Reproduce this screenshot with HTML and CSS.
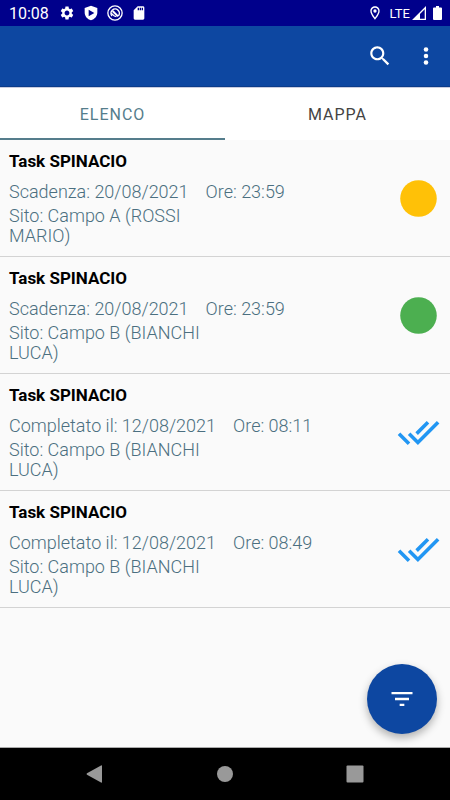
FILE: index.html
```html
<!DOCTYPE html>
<html lang="it">
<head>
<meta charset="utf-8">
<meta name="viewport" content="width=device-width, initial-scale=1">
<title>Elenco task</title>
<link rel="stylesheet" href="styles.css">
</head>
<body>
<div class="status">
  <span class="clock">10:08</span>
  <div class="status-left">
    <svg class="s-icon" viewBox="0 0 24 24"><path d="M19.14 12.94c.04-.3.06-.61.06-.94 0-.32-.02-.64-.07-.94l2.03-1.58c.18-.14.23-.41.12-.61l-1.92-3.32c-.12-.22-.37-.29-.59-.22l-2.39.96c-.5-.38-1.03-.7-1.62-.94l-.36-2.54c-.04-.24-.24-.41-.48-.41h-3.84c-.24 0-.43.17-.47.41l-.36 2.54c-.59.24-1.13.57-1.62.94l-2.39-.96c-.22-.08-.47 0-.59.22L2.74 8.87c-.12.21-.08.47.12.61l2.03 1.58c-.05.3-.09.63-.09.94s.02.64.07.94l-2.03 1.58c-.18.14-.23.41-.12.61l1.92 3.32c.12.22.37.29.59.22l2.39-.96c.5.38 1.03.7 1.62.94l.36 2.54c.05.24.24.41.48.41h3.84c.24 0 .44-.17.47-.41l.36-2.54c.59-.24 1.13-.56 1.62-.94l2.39.96c.22.08.47 0 .59-.22l1.92-3.32c.12-.22.07-.47-.12-.61l-2.01-1.58zM12 15.6c-1.98 0-3.6-1.62-3.6-3.6s1.62-3.6 3.6-3.6 3.6 1.62 3.6 3.6-1.62 3.6-3.6 3.6z"/></svg>
    <svg class="s-icon" viewBox="0 0 24 24"><path fill-rule="evenodd" d="M12 1L2.500 4.600V11c0 6 4 10.500 9.500 12 5.500-1.500 9.500-6 9.500-12V4.600zM8.500 7L17 12l-8.500 5z"/></svg>
    <svg class="s-icon" viewBox="0 0 24 24"><g fill="none" stroke="#fff"><circle cx="12" cy="12" r="10.700" stroke-width="2"/><path stroke-width="2.200" d="M7.500 16.500a6.300 6.300 0 1 1 9.500 0"/><path stroke-width="3" d="M8.500 9l8 8"/><path stroke-width="2" d="M6 12.500c2 0 3 5 8 5"/></g></svg>
    <svg class="s-icon" viewBox="0 0 24 24"><path d="M18 2h-8L4 8v12c0 1.100.9 2 2 2h12c1.100 0 2-.9 2-2V4c0-1.100-.9-2-2-2zm-6 6h-2V4h2v4zm3 0h-2V4h2v4zm3 0h-2V4h2v4z"/></svg>
  </div>
  <div class="status-right">
    <svg class="pin" viewBox="0 0 24 24"><path d="M12 2C8.130 2 5 5.130 5 9c0 5.250 7 13 7 13s7-7.750 7-13c0-3.870-3.130-7-7-7zM7 9c0-2.760 2.240-5 5-5s5 2.240 5 5c0 2.880-2.880 7.190-5 9.880C9.920 16.210 7 11.850 7 9z"/><circle cx="12" cy="9" r="2.500"/></svg>
    <span class="lte">LTE</span>
    <svg class="signal" viewBox="0 0 14 14"><path fill-rule="evenodd" d="M14 0v14H0zM12.700 3.200L8 8v4.700h4.700z"/></svg>
    <svg class="battery" viewBox="0 0 9 14"><path d="M3 0h3v1.500h2q1 0 1 1V13q0 1-1 1H1q-1 0-1-1V2.500q0-1 1-1h2z"/></svg>
  </div>
</div>

<header class="appbar">
  <button class="bar-btn" aria-label="Cerca"><svg viewBox="0 0 24 24"><path d="M15.500 14h-.79l-.28-.27C15.410 12.590 16 11.110 16 9.500 16 5.910 13.090 3 9.500 3S3 5.910 3 9.500 5.910 16 9.500 16c1.610 0 3.090-.59 4.230-1.570l.27.28v.79l5 4.990L20.490 19l-4.990-5zm-6 0C7.010 14 5 11.990 5 9.500S7.010 5 9.500 5 14 7.010 14 9.500 11.990 14 9.500 14z"/></svg></button>
  <button class="bar-btn" aria-label="Altre opzioni"><svg viewBox="0 0 24 24"><circle cx="12" cy="6" r="2.100"/><circle cx="12" cy="12" r="2.100"/><circle cx="12" cy="18" r="2.100"/></svg></button>
</header>

<nav class="tabs">
  <button class="tab active">ELENCO</button>
  <button class="tab">MAPPA</button>
</nav>

<main class="content">
  <ul class="list">
    <li class="task">
      <div class="info">
        <h2>Task SPINACIO</h2>
        <p class="when"><span>Scadenza: 20/08/2021</span><span>Ore: 23:59</span></p>
        <p class="site">Sito: Campo A (ROSSI MARIO)</p>
      </div>
      <svg class="state amber" viewBox="0 0 24 24"><circle cx="12" cy="12" r="10.200"/></svg>
    </li>
    <li class="task">
      <div class="info">
        <h2>Task SPINACIO</h2>
        <p class="when"><span>Scadenza: 20/08/2021</span><span>Ore: 23:59</span></p>
        <p class="site">Sito: Campo B (BIANCHI LUCA)</p>
      </div>
      <svg class="state green" viewBox="0 0 24 24"><circle cx="12" cy="12" r="10.200"/></svg>
    </li>
    <li class="task">
      <div class="info">
        <h2>Task SPINACIO</h2>
        <p class="when"><span>Completato il: 12/08/2021</span><span>Ore: 08:11</span></p>
        <p class="site">Sito: Campo B (BIANCHI LUCA)</p>
      </div>
      <svg class="state done" viewBox="0 0 24 24"><path d="M18 7l-1.410-1.410-6.340 6.340 1.410 1.410L18 7zm4.240-1.410L11.660 16.170 7.480 12l-1.410 1.410L11.660 19l12-12-1.420-1.410zM.41 13.410L6 19l1.410-1.410L1.830 12 .41 13.410z"/></svg>
    </li>
    <li class="task">
      <div class="info">
        <h2>Task SPINACIO</h2>
        <p class="when"><span>Completato il: 12/08/2021</span><span>Ore: 08:49</span></p>
        <p class="site">Sito: Campo B (BIANCHI LUCA)</p>
      </div>
      <svg class="state done" viewBox="0 0 24 24"><path d="M18 7l-1.410-1.410-6.340 6.340 1.410 1.410L18 7zm4.240-1.410L11.660 16.170 7.480 12l-1.410 1.410L11.660 19l12-12-1.420-1.410zM.41 13.410L6 19l1.410-1.410L1.830 12 .41 13.410z"/></svg>
    </li>
  </ul>
  <button class="fab" aria-label="Filtra"><svg viewBox="0 0 24 24"><path d="M10 18h4v-2h-4v2zM3 6v2h18V6H3zm3 7h12v-2H6v2z"/></svg></button>
</main>

<footer class="navbar">
  <button class="nav-btn" aria-label="Indietro"><svg viewBox="0 0 18 18"><path d="M16 1v16q0 1-1 .5L1 9.700q-1-.7 0-1.400L15 .5q1-.5 1 .5z"/></svg></button>
  <button class="nav-btn" aria-label="Home"><svg viewBox="0 0 18 18"><circle cx="9" cy="9" r="8"/></svg></button>
  <button class="nav-btn" aria-label="Recenti"><svg viewBox="0 0 18 18"><rect x=".5" y=".5" width="17" height="17" rx="1"/></svg></button>
</footer>
</body>
</html>
```
FILE: styles.css
```css
* {
  box-sizing: border-box;
}

body {
  margin: 0;
  min-height: 100vh;
  display: flex;
  flex-direction: column;
  background: #fafafa;
  font-family: Roboto, "Liberation Sans", sans-serif;
}

button {
  border: 0;
  padding: 0;
  background: none;
  font: inherit;
}

svg {
  display: block;
  fill: #fff;
}

.status {
  display: flex;
  align-items: center;
  height: 26px;
  padding: 0 8px 0 9px;
  background: #00008b;
  color: #fff;
}

.clock {
  padding-top: 1px;
  font-size: 16px;
  line-height: 26px;
}

.status-left {
  display: flex;
  gap: 8px;
  margin-left: 10px;
}

.s-icon {
  width: 16px;
  height: 16px;
}

.status-right {
  display: flex;
  align-items: center;
  margin-left: auto;
}

.pin {
  width: 16px;
  height: 16px;
  margin-right: 7px;
}

.lte {
  font-size: 13px;
}

.signal {
  width: 14px;
  height: 14px;
  margin: 0 7px 0 2px;
}

.battery {
  width: 9px;
  height: 14px;
}

.appbar {
  display: flex;
  justify-content: flex-end;
  align-items: center;
  height: 61px;
  padding-right: 1px;
  background: #0d47a1;
  border-bottom: 1px solid #0b3c89;
}

.bar-btn {
  display: grid;
  place-items: center;
  width: 46px;
  height: 46px;
}

.bar-btn svg {
  width: 26px;
  height: 26px;
}

.tabs {
  display: grid;
  grid-template-columns: 1fr 1fr;
  height: 53px;
  background: #fff;
  border-top: 1px solid #c9cce0;
}

.tab {
  padding-top: 2px;
  border-bottom: 2px solid transparent;
  color: #444;
  font-size: 16px;
  font-weight: 400;
  letter-spacing: 1px;
}

.tab.active {
  color: #557d8c;
  border-color: #557d8c;
}

.content {
  flex: 1;
  display: flex;
  flex-direction: column;
}

.list {
  margin: 0;
  padding: 0;
  list-style: none;
}

.task {
  display: flex;
  align-items: center;
  justify-content: space-between;
  padding: 10px 10px 10px 9px;
  border-bottom: 1px solid #d3d3d3;
  color: #4b6f80;
  font-size: 18px;
  font-weight: 300;
  line-height: 21px;
}

.task h2 {
  margin: 0 0 9px;
  color: #000;
  font-size: 17px;
  font-weight: 700;
  line-height: 22px;
}

.when {
  display: flex;
  gap: 17px;
  margin: 0 0 4px;
}

.site {
  margin: 0;
  max-width: 208px;
  line-height: 20px;
}

.state {
  width: 43px;
  height: 43px;
}

.amber {
  fill: #ffc107;
}

.green {
  fill: #4caf50;
}

.done {
  fill: #2196f3;
}

.fab {
  display: grid;
  place-items: center;
  width: 70px;
  height: 70px;
  margin: auto 13px 13px auto;
  border-radius: 50%;
  background: #0d47a1;
  box-shadow: 0 4px 8px rgba(0, 0, 0, 0.3);
}

.fab svg {
  width: 28px;
  height: 28px;
}

.navbar {
  display: flex;
  justify-content: center;
  gap: 82px;
  height: 53px;
  background: #000;
  border-top: 1px solid #aaa;
}

.nav-btn {
  display: grid;
  place-items: center;
  width: 48px;
}

.nav-btn svg {
  width: 18px;
  height: 18px;
  fill: #999;
}
```
